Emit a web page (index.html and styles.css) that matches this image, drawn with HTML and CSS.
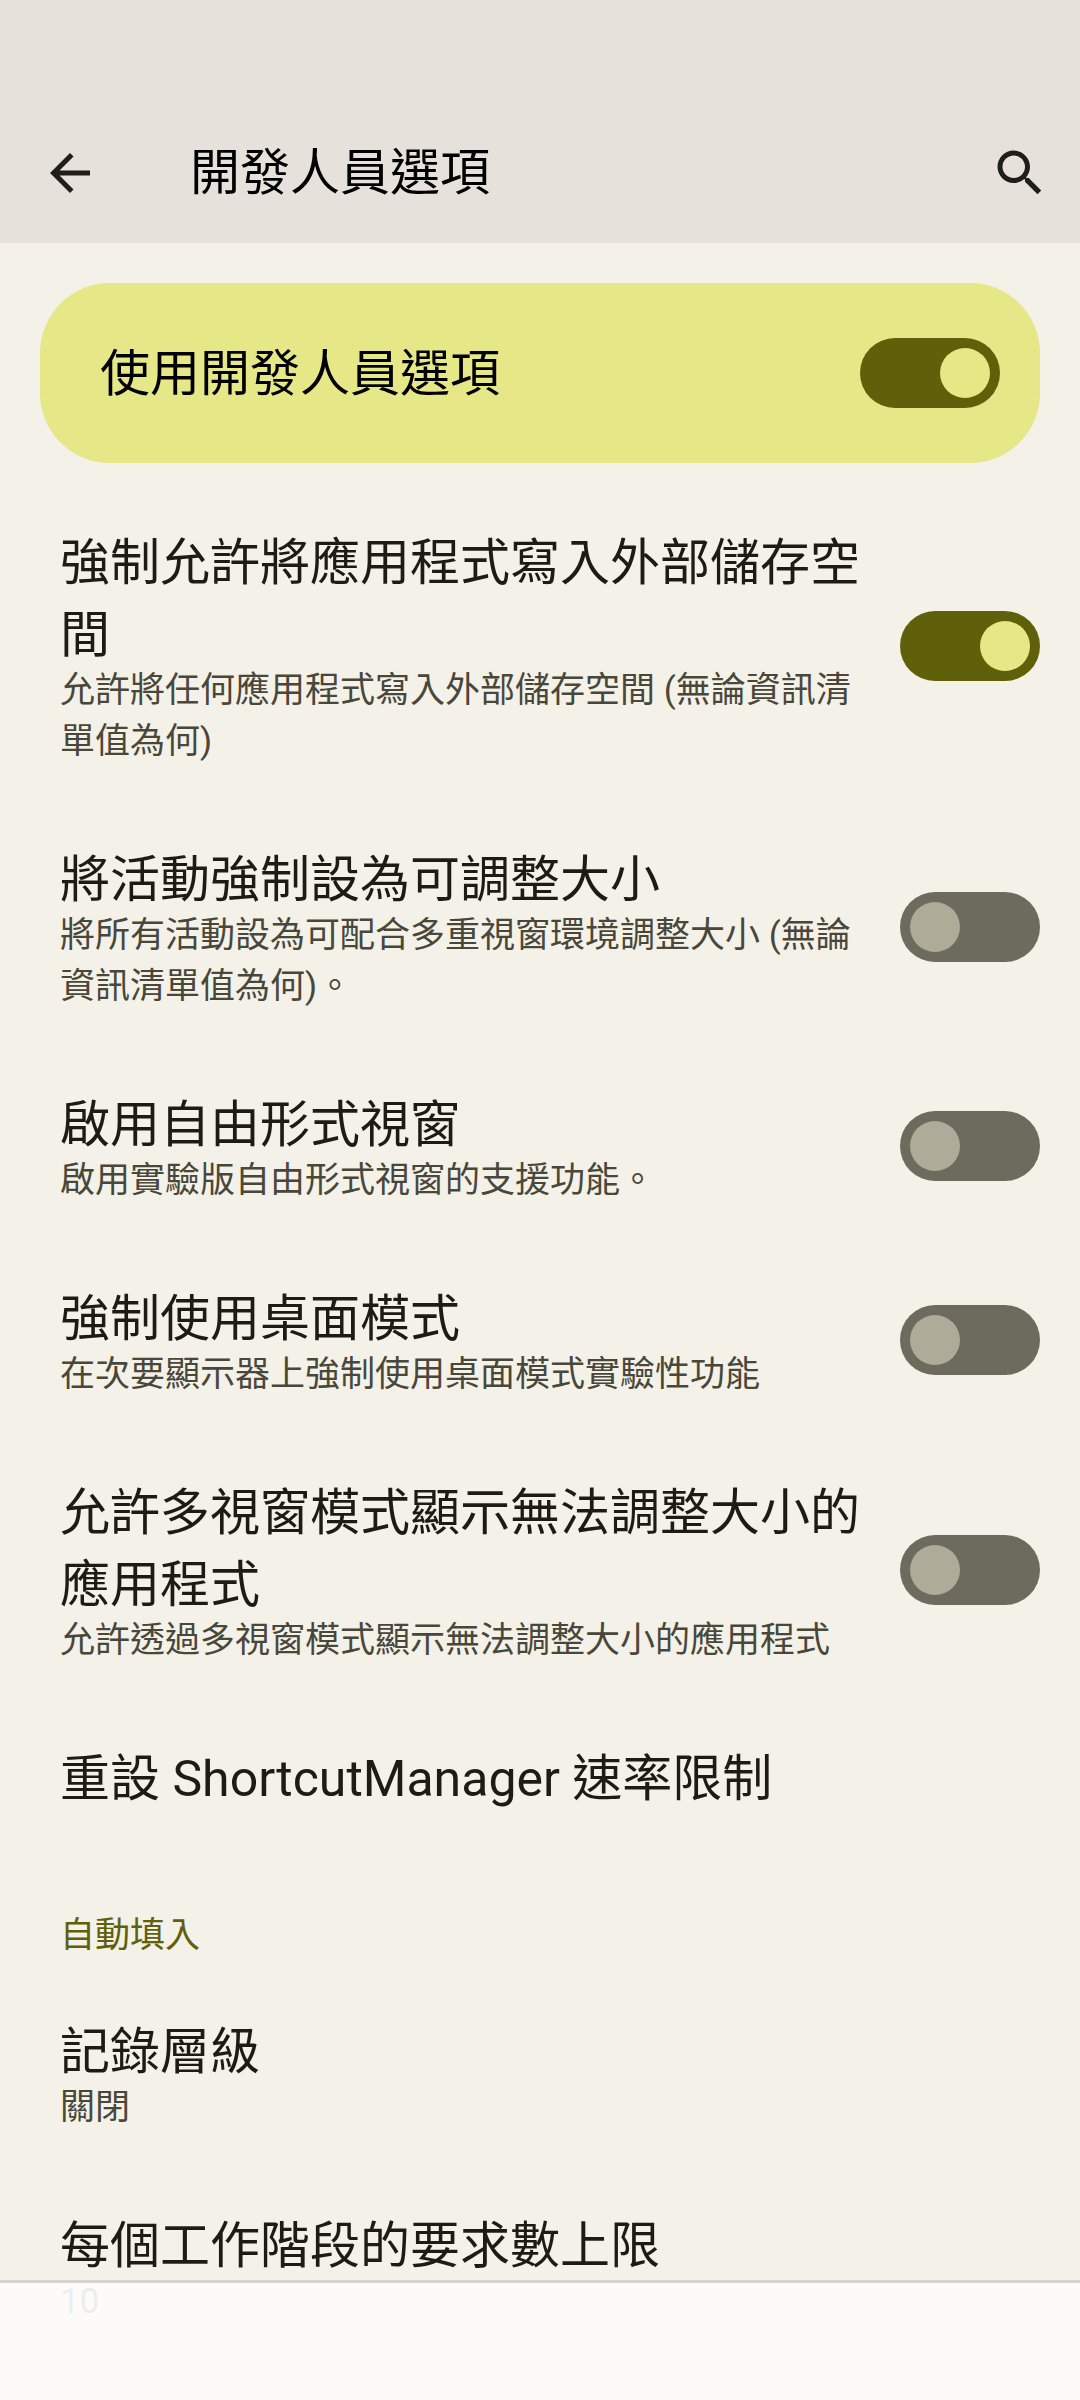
FILE: index.html
```html
<!DOCTYPE html>
<html lang="zh-Hant">
<head>
  <meta charset="utf-8">
  <meta name="viewport" content="width=device-width, initial-scale=1">
  <title>開發人員選項</title>
  <link rel="stylesheet" href="styles.css">
</head>
<body>
  <header class="app-bar">
    <button class="icon-button" type="button" aria-label="返回">
      <svg class="icon" viewBox="0 0 24 24" aria-hidden="true"><path d="M20 11H7.83l5.59-5.59L12 4l-8 8 8 8 1.41-1.41L7.83 13H20v-2z"/></svg>
    </button>
    <h1 class="app-title">開發人員選項</h1>
    <button class="icon-button" type="button" aria-label="搜尋">
      <svg class="icon" viewBox="0 0 24 24" aria-hidden="true"><path d="M15.5 14h-.79l-.28-.27C15.41 12.59 16 11.11 16 9.5 16 5.91 13.09 3 9.5 3S3 5.91 3 9.5 5.91 16 9.5 16c1.61 0 3.09-.59 4.23-1.57l.27.28v.79l5 4.99L20.49 19l-4.99-5zm-6 0C7.01 14 5 11.99 5 9.5S7.01 5 9.5 5 14 7.01 14 9.5 11.99 14 9.5 14z"/></svg>
    </button>
  </header>

  <main class="settings">
    <label class="main-switch">
      <span class="main-switch-title">使用開發人員選項</span>
      <input class="switch" type="checkbox" role="switch" checked>
    </label>

    <label class="row">
      <span class="row-text">
        <span class="row-title">強制允許將應用程式寫入外部儲存空間</span>
        <span class="row-summary">允許將任何應用程式寫入外部儲存空間 (無論資訊清單值為何)</span>
      </span>
      <input class="switch" type="checkbox" role="switch" checked>
    </label>
    <label class="row">
      <span class="row-text">
        <span class="row-title">將活動強制設為可調整大小</span>
        <span class="row-summary">將所有活動設為可配合多重視窗環境調整大小 (無論資訊清單值為何)。</span>
      </span>
      <input class="switch" type="checkbox" role="switch">
    </label>
    <label class="row">
      <span class="row-text">
        <span class="row-title">啟用自由形式視窗</span>
        <span class="row-summary">啟用實驗版自由形式視窗的支援功能。</span>
      </span>
      <input class="switch" type="checkbox" role="switch">
    </label>
    <label class="row">
      <span class="row-text">
        <span class="row-title">強制使用桌面模式</span>
        <span class="row-summary">在次要顯示器上強制使用桌面模式實驗性功能</span>
      </span>
      <input class="switch" type="checkbox" role="switch">
    </label>
    <label class="row">
      <span class="row-text">
        <span class="row-title">允許多視窗模式顯示無法調整大小的應用程式</span>
        <span class="row-summary">允許透過多視窗模式顯示無法調整大小的應用程式</span>
      </span>
      <input class="switch" type="checkbox" role="switch">
    </label>
    <button class="row" type="button">
      <span class="row-text">
        <span class="row-title">重設 ShortcutManager 速率限制</span>
      </span>
    </button>

    <h2 class="category">自動填入</h2>
    <button class="row" type="button">
      <span class="row-text">
        <span class="row-title">記錄層級</span>
        <span class="row-summary">關閉</span>
      </span>
    </button>
    <button class="row" type="button">
      <span class="row-text">
        <span class="row-title">每個工作階段的要求數上限</span>
        <span class="row-summary">10</span>
      </span>
    </button>
  </main>

  <div class="nav-bar"></div>
</body>
</html>
```
FILE: styles.css
```css
:root {
  --background: #f4f1e8;
  --bar: #e6e1da;
  --accent: #60600a;
  --accent-light: #e6e786;
  --text: #1c1c14;
  --text-soft: #48473a;
}

* {
  box-sizing: border-box;
}

body {
  margin: 0;
  min-height: 100vh;
  background: var(--background);
  color: var(--text);
  font-family: Roboto, "Noto Sans CJK TC", sans-serif;
  font-size: 50px;
  line-height: 72px;
}

button {
  border: 0;
  background: none;
  color: inherit;
  font: inherit;
  text-align: left;
}

.app-bar {
  display: flex;
  align-items: center;
  gap: 90px;
  padding: 137px 30px 34px 40px;
  background: var(--bar);
}

.icon-button {
  display: flex;
  padding: 0;
}

.icon {
  width: 60px;
  height: 60px;
  fill: #1f1e1a;
}

.app-title {
  flex: 1;
  margin: 0;
  color: #000;
  font-size: 50px;
  font-weight: 400;
}

.main-switch {
  display: flex;
  align-items: center;
  justify-content: space-between;
  margin: 40px 40px 23px;
  padding: 53px 40px 53px 60px;
  border-radius: 70px;
  background: var(--accent-light);
}

.main-switch-title {
  padding-top: 2px;
  color: #000;
}

.row {
  display: flex;
  align-items: center;
  gap: 30px;
  width: 100%;
  padding: 38px 40px 36px 60px;
}

.row-text {
  display: flex;
  flex: 1;
  flex-direction: column;
  padding-top: 3px;
}

.row-summary {
  margin-top: -6px;
  color: var(--text-soft);
  font-size: 35px;
  line-height: 51px;
}

.category {
  margin: 0;
  padding: 59px 60px 14px;
  color: var(--accent);
  font-size: 35px;
  font-weight: 400;
  line-height: 51px;
}

.switch {
  flex: none;
  display: flex;
  width: 140px;
  height: 70px;
  margin: 0;
  padding: 10px;
  border-radius: 35px;
  background: #6c6b5d;
  appearance: none;
}

.switch::before {
  content: "";
  width: 50px;
  height: 50px;
  border-radius: 50%;
  background: #aeab99;
}

.switch:checked {
  justify-content: flex-end;
  background: var(--accent);
}

.switch:checked::before {
  background: var(--accent-light);
}

.nav-bar {
  position: fixed;
  right: 0;
  bottom: 0;
  left: 0;
  height: 120px;
  border-top: 3px solid #d6d3cb;
  background: rgb(252 252 251 / 92%);
  background-clip: padding-box;
}
```
